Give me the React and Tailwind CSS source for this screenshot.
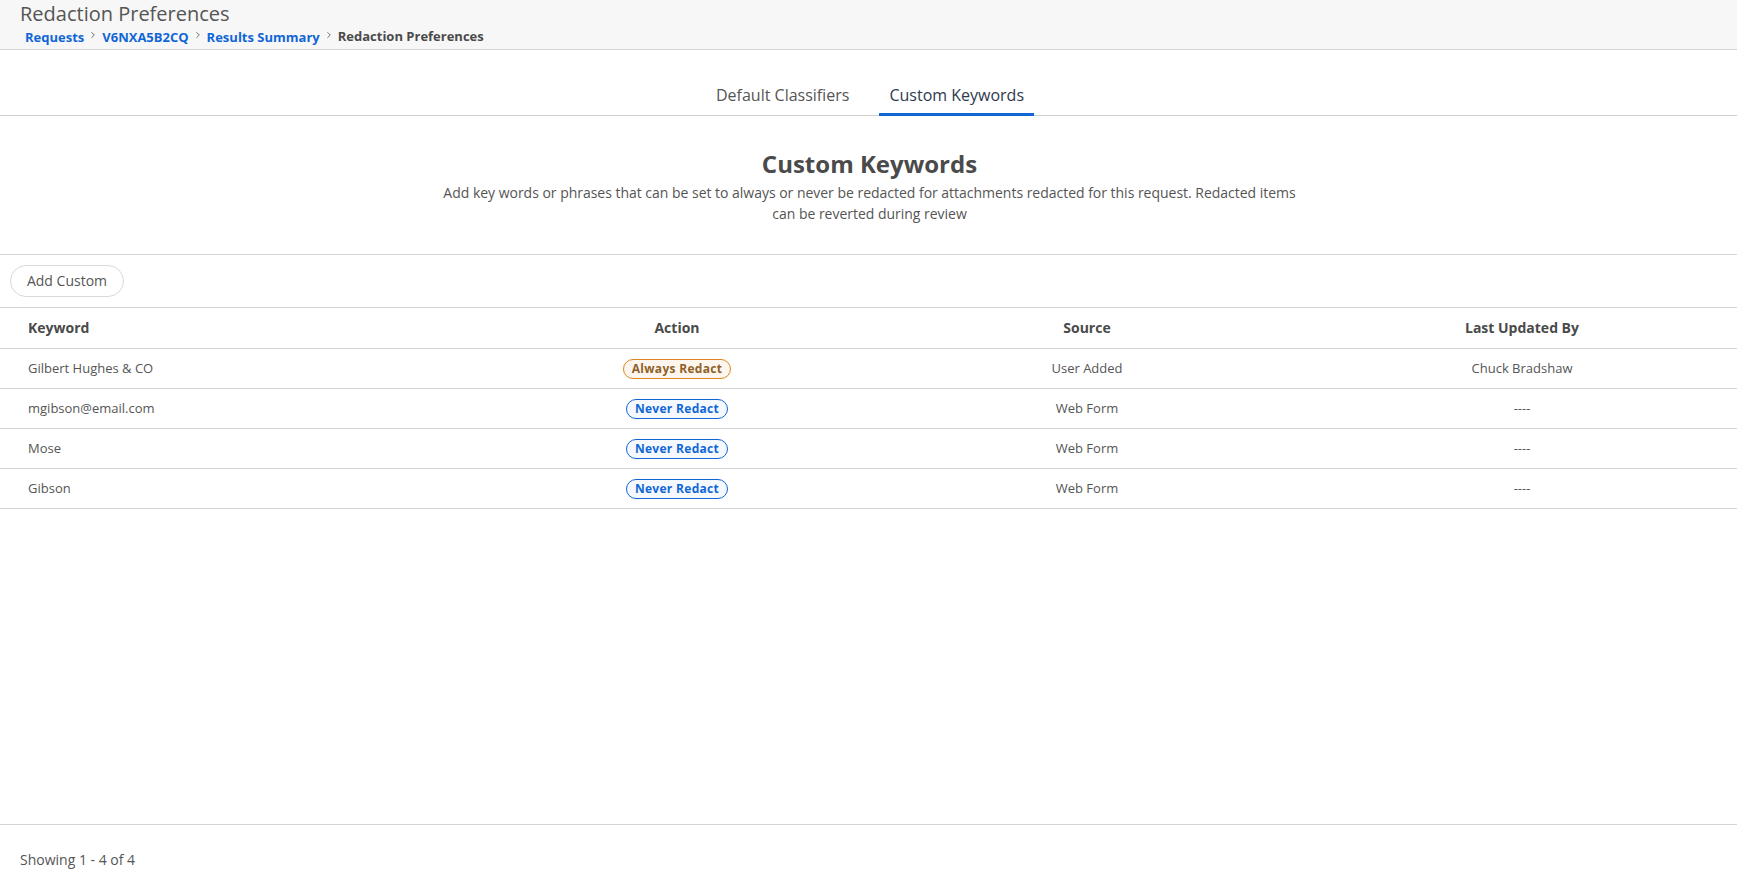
import { ChevronRight } from "lucide-react";

const rows = [
    { keyword: "Gilbert Hughes & CO", action: "Always Redact", source: "User Added", updatedBy: "Chuck Bradshaw" },
    { keyword: "mgibson@email.com", action: "Never Redact", source: "Web Form", updatedBy: "----" },
    { keyword: "Mose", action: "Never Redact", source: "Web Form", updatedBy: "----" },
    { keyword: "Gibson", action: "Never Redact", source: "Web Form", updatedBy: "----" },
];

const crumbs = ["Requests", "V6NXA5B2CQ", "Results Summary"];

function Badge({ action }) {
    const always = action === "Always Redact";
    return (
        <span className={`inline-flex h-5 items-center rounded-full border px-2 text-xs font-bold tracking-[0.3px] ${always ? "border-[#dd851f] bg-[#fdf6ee] text-[#8f6128]" : "border-[#1166d6] bg-[#f5f9fe] text-[#1166d6]"}`}>
            {action}
        </span>
    );
}

function App() {
    return (
        <div className="flex h-[894px] w-full flex-col bg-white font-['Open_Sans',sans-serif] text-[#4a4a4a]">
            <header className="h-[50px] border-b border-[#d4d4d4] bg-[#f7f7f7] pl-5">
                <h1 className="text-xl leading-[27px] text-[#555]">Redaction Preferences</h1>
                <nav className="flex items-center pl-[5px] text-[13px] leading-[18px] font-bold">
                    {crumbs.map((crumb) => (
                        <div key={crumb} className="flex items-center">
                            <a className="text-[#1166d6]">{crumb}</a>
                            <ChevronRight className="mx-1 mb-1 h-[10px] w-[10px] text-[#555]" strokeWidth={2} />
                        </div>
                    ))}
                    <span className="mb-[2px] text-[#4a4a4a]">Redaction Preferences</span>
                </nav>
            </header>

            <div className="flex h-[66px] items-end justify-center gap-5 border-b border-[#d0d0d0] pl-[3px]">
                <button className="h-10 px-[10px] text-base text-[#555]">Default Classifiers</button>
                <button className="-mb-px h-[39px] border-b-[3px] border-[#1166d6] px-[10px] text-base text-[#2d3a4e]">Custom Keywords</button>
            </div>

            <section className="flex h-[139px] flex-col items-center border-b border-[#d4d4d4] pt-[31px] text-center">
                <h2 className="pl-[2px] text-2xl leading-[33px] font-bold">Custom Keywords</h2>
                <p className="mt-[2px] w-[870px] pl-[2px] text-sm leading-[21px] tracking-[-0.02px] text-[#555]">
                    Add key words or phrases that can be set to always or never be redacted for attachments redacted for this request. Redacted items can be reverted during review
                </p>
            </section>

            <div className="flex h-[53px] items-center border-b border-[#d4d4d4] pl-[10px]">
                <button className="h-8 w-[114px] rounded-full border border-[#d9d9d9] text-sm text-[#555]">Add Custom</button>
            </div>

            <div className="grid h-[41px] grid-cols-[487px_380px_440px_430px] items-center border-b border-[#d4d4d4] text-sm font-bold">
                <div className="pl-7">Keyword</div>
                <div className="text-center">Action</div>
                <div className="text-center">Source</div>
                <div className="text-center">Last Updated By</div>
            </div>

            {rows.map((row) => (
                <div key={row.keyword} className="grid h-10 grid-cols-[487px_380px_440px_430px] items-center border-b border-[#d4d4d4] text-[13px] text-[#555]">
                    <div className="pl-7">{row.keyword}</div>
                    <div className="text-center"><Badge action={row.action} /></div>
                    <div className="text-center">{row.source}</div>
                    <div className="text-center">{row.updatedBy}</div>
                </div>
            ))}

            <div className="flex-1" />

            <footer className="flex h-[70px] items-center border-t border-[#d4d4d4] pl-5 text-sm text-[#555]">
                Showing 1 - 4 of 4
            </footer>
        </div>
    );
}

export default App;
